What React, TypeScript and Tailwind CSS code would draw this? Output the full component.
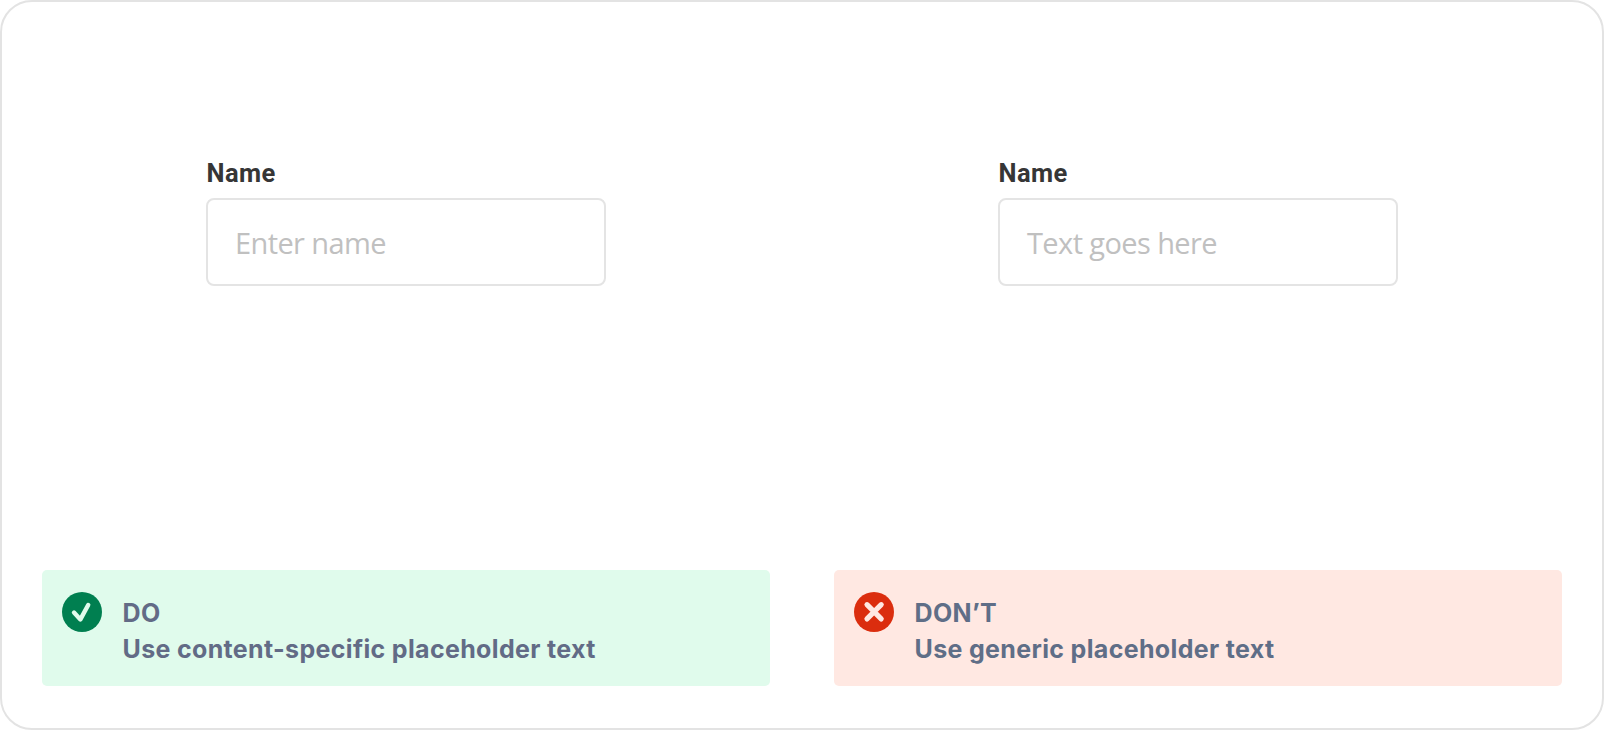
import React from 'react';

type ExampleProps = {
  placeholder: string;
  title: string;
  message: string;
  calloutClass: string;
  icon: React.ReactNode;
};

const CheckIcon = () => (
  <svg className="h-10 w-10 shrink-0" viewBox="0 0 40 40" fill="none">
    <circle cx="20" cy="20" r="20" fill="#007f50" />
    <path d="M12 20.6 18.4 27.4 26.2 13" stroke="#e0fbec" strokeWidth="4.4" strokeLinecap="round" strokeLinejoin="round" />
  </svg>
);

const CrossIcon = () => (
  <svg className="h-10 w-10 shrink-0" viewBox="0 0 40 40" fill="none">
    <circle cx="20" cy="20" r="20" fill="#db2d0e" />
    <path d="M13 12.7 27.2 26.9M27.2 12.7 13 26.9" stroke="#ffe8e2" strokeWidth="5.2" strokeLinecap="round" />
  </svg>
);

function Example({ placeholder, title, message, calloutClass, icon }: ExampleProps) {
  return (
    <section className="flex w-[728px] flex-col justify-between">
      <div className="ml-[164px] flex w-[400px] flex-col pt-[114px]">
        <label className="h-[42px] pl-[0.5px] text-[25.5px] leading-[34px] font-bold tracking-[0.45px] whitespace-nowrap text-[#363636]">
          Name
        </label>
        <div className="flex h-[88px] items-center rounded-lg border-2 border-[#e4e4e4] bg-white pl-[27px]">
          <span className="pt-px font-['Open_Sans',sans-serif] text-[29px] font-normal tracking-[-0.6px] whitespace-nowrap text-[#c0c0c0]">
            {placeholder}
          </span>
        </div>
      </div>
      <div className={calloutClass}>
        {icon}
        <div className="flex flex-col pt-[3px] pl-[0.5px] font-bold tracking-[0.34px] whitespace-nowrap">
          <span>{title}</span>
          <span>{message}</span>
        </div>
      </div>
    </section>
  );
}

export default function App() {
  return (
    <main className="flex h-[730px] w-[1604px] justify-between rounded-[32px] border-2 border-[#e3e3e3] bg-white px-10 pt-10 pb-[42px] font-['Roboto',sans-serif]">
      <Example
        placeholder="Enter name"
        title="DO"
        message="Use content-specific placeholder text"
        calloutClass="flex h-[116px] gap-5 rounded-[5px] bg-[#e0fbec] pt-[22px] pl-5 font-['Inter',sans-serif] text-[25px] leading-9 text-[#626b86]"
        icon={<CheckIcon />}
      />
      <Example
        placeholder="Text goes here"
        title="DON’T"
        message="Use generic placeholder text"
        calloutClass="flex h-[116px] gap-5 rounded-[5px] bg-[#ffe8e2] pt-[22px] pl-5 font-['Inter',sans-serif] text-[25px] leading-9 text-[#5f6e87]"
        icon={<CrossIcon />}
      />
    </main>
  );
}
